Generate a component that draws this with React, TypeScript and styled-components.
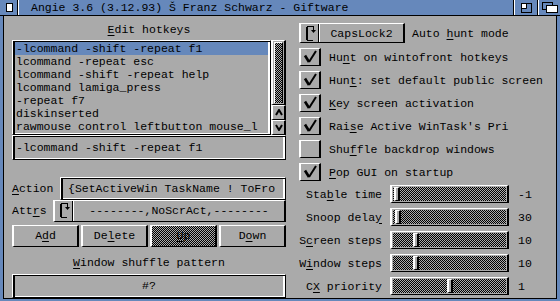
import React from "react";
import styled, { createGlobalStyle, css } from "styled-components";

const gray = "#aaaaaa";
const blue = "#6688bb";

const GlobalStyle = createGlobalStyle`
  html, body {
    margin: 0;
    padding: 0;
    background: ${gray};
  }
  body {
    font-family: "Liberation Mono", "Courier New", monospace;
    font-size: 11.5px;
    color: #000;
  }
  * {
    box-sizing: border-box;
  }
`;

const raised = css`
  border-style: solid;
  border-width: 1px 2px;
  border-color: #fff #000 #000 #fff;
`;

const ridge = css`
  border-style: solid;
  border-width: 1px;
  border-color: #fff #000 #000 #fff;
  box-shadow: inset 2px 1px 0 #000, inset -2px -1px 0 #fff;
`;

const dither = css`
  background: repeating-conic-gradient(#000 0% 25%, ${gray} 0% 50%) 0 0 / 2px 2px;
`;

const hotkeys = [
  "-lcommand -shift -repeat f1",
  "lcommand -repeat esc",
  "lcommand -shift -repeat help",
  "lcommand lamiga_press",
  "-repeat f7",
  "diskinserted",
  "rawmouse control leftbutton mouse_l",
];

export default function App() {
  const options = [
    { label: <>Hu<K>n</K>t on wintofront hotkeys</>, on: true },
    { label: <>Hun<K>t</K>: set default public screen</>, on: true },
    { label: <><K>K</K>ey screen activation</>, on: true },
    { label: <>Rai<K>s</K>e Active WinTask's Pri</>, on: true },
    { label: <>Shu<K>f</K>fle backdrop windows</>, on: false },
    { label: <><K>P</K>op GUI on startup</>, on: true },
  ];

  const sliders = [
    { label: <>Sta<K>b</K>le time</>, value: "-1", knob: 2 },
    { label: <>Snoop dela<K>y</K></>, value: "30", knob: 3 },
    { label: <>S<K>c</K>reen steps</>, value: "10", knob: 21 },
    { label: <>W<K>i</K>ndow steps</>, value: "10", knob: 21 },
    { label: <>C<K>X</K> priority</>, value: "1", knob: 55 },
  ];

  return (
    <Window>
      <GlobalStyle />
      <TitleBar>
        <CloseGadget>
          <svg width="7" height="9" viewBox="0 0 7 9">
            <rect x="0.5" y="0.5" width="6" height="8" fill="#fff" stroke="#000" />
          </svg>
        </CloseGadget>
        <TitleText>Angie 3.6 (3.12.93) Š Franz Schwarz - Giftware</TitleText>
        <TitleGadget>
          <svg width="11" height="10" viewBox="0 0 11 10">
            <rect x="0.5" y="0.5" width="10" height="9" fill={blue} stroke="#000" />
            <rect x="1" y="1" width="4" height="4" fill="#fff" />
            <path d="M5.5 1 V5.5 H1" fill="none" stroke="#000" />
          </svg>
        </TitleGadget>
        <TitleGadget $last>
          <svg width="16" height="11" viewBox="0 0 16 11">
            <rect x="0.5" y="0.5" width="10" height="7" fill={blue} stroke="#000" />
            <rect x="4.5" y="3.5" width="11" height="7" fill="#fff" stroke="#000" />
          </svg>
        </TitleGadget>
      </TitleBar>

      <Body>
        <LeftCol>
          <Heading $h={17}>
            <K>E</K>dit hotkeys
          </Heading>
          <ListRow>
            <ListBox>
              {hotkeys.map((h, i) => (
                <ListItem key={h} $selected={i === 0}>
                  {h}
                </ListItem>
              ))}
            </ListBox>
            <ScrollBar>
              <PropBox>
                <PropKnob />
              </PropBox>
              <ArrowButton>
                <svg width="8" height="7" viewBox="0 0 8 7">
                  <path d="M1 6 L4 1 L7 6" fill="none" stroke="#000" strokeWidth="2" />
                </svg>
              </ArrowButton>
              <ArrowButton>
                <svg width="8" height="7" viewBox="0 0 8 7">
                  <path d="M1 1 L4 6 L7 1" fill="none" stroke="#000" strokeWidth="2" />
                </svg>
              </ArrowButton>
            </ScrollBar>
          </ListRow>
          <Field $pad={3}>-lcommand -shift -repeat f1</Field>

          <FieldRow $top={17} $h={23}>
            <FieldLabel $w={48}>
              <K>A</K>ction
            </FieldLabel>
            <Field $pad={7}>{"{SetActiveWin TaskName ! ToFro"}</Field>
          </FieldRow>
          <FieldRow $top={0} $h={22}>
            <FieldLabel $w={41}>
              Att<K>r</K>s
            </FieldLabel>
            <Cycle>
              <CycleIcon>
                <CycleGlyph />
              </CycleIcon>
              <CycleText>--------,NoScrAct,--------</CycleText>
            </Cycle>
          </FieldRow>
          <ButtonRow>
            <Button>
              A<K>d</K>d
            </Button>
            <Button>
              De<K>l</K>ete
            </Button>
            <Button $ghost>
              <K>U</K>p
            </Button>
            <Button>
              D<K>o</K>wn
            </Button>
          </ButtonRow>
          <Heading $h={27} $padTop={9}>
            <K>W</K>indow shuffle pattern
          </Heading>
          <Field $center>#?</Field>
        </LeftCol>

        <RightCol>
          <CycleRow>
            <Cycle $w={106}>
              <CycleIcon>
                <CycleGlyph />
              </CycleIcon>
              <CycleText>CapsLock2</CycleText>
            </Cycle>
            <span>
              Auto <K>h</K>unt mode
            </span>
          </CycleRow>

          <CheckList>
            {options.map((o, i) => (
              <CheckRow key={i}>
                <CheckBox>
                  {o.on && (
                    <svg width="18" height="16" viewBox="0 0 18 16">
                      <path d="M4 6.5 L8 13" stroke="#000" strokeWidth="2.6" fill="none" />
                      <path d="M8 13 L15 2" stroke="#000" strokeWidth="2" fill="none" />
                    </svg>
                  )}
                </CheckBox>
                <span>{o.label}</span>
              </CheckRow>
            ))}
          </CheckList>

          <SliderGrid>
            {sliders.map((s, i) => (
              <React.Fragment key={i}>
                <SliderLabel>{s.label}</SliderLabel>
                <Track>
                  <Knob style={{ left: s.knob }} />
                </Track>
                <Value>{s.value}</Value>
              </React.Fragment>
            ))}
          </SliderGrid>
        </RightCol>
      </Body>
    </Window>
  );
}

function CycleGlyph() {
  return (
    <svg width="10" height="15" viewBox="0 0 10 15">
      <rect x="0" y="1" width="2" height="13" fill="#000" />
      <rect x="1" y="0" width="7" height="1" fill="#000" />
      <rect x="1" y="14" width="6" height="1" fill="#000" />
      <rect x="7" y="0" width="1" height="4" fill="#000" />
      <polygon points="5,4 10,4 7.5,7" fill="#000" />
    </svg>
  );
}

const K = styled.span`
  text-decoration: underline;
  text-decoration-thickness: 1px;
  text-underline-offset: 2px;
`;

const Window = styled.div`
  width: 560px;
  height: 301px;
  background: ${blue};
  display: flex;
  flex-direction: column;
  overflow: hidden;
`;

const TitleBar = styled.div`
  height: 16px;
  display: flex;
  border-bottom: 1px solid #000;
`;

const CloseGadget = styled.div`
  width: 18px;
  display: flex;
  align-items: center;
  padding-left: 6px;
  border-right: 1px solid #000;
`;

const TitleText = styled.div`
  flex: 1;
  padding-left: 12px;
  line-height: 15px;
  white-space: nowrap;
  border-left: 1px solid #fff;
  border-right: 1px solid #000;
`;

const TitleGadget = styled.div<{ $last?: boolean }>`
  width: ${(p) => (p.$last ? 22 : 24)}px;
  display: flex;
  align-items: center;
  justify-content: center;
  border-left: 1px solid #fff;
  border-right: ${(p) => (p.$last ? "none" : "1px solid #000")};
`;

const Body = styled.div`
  flex: 1;
  margin: 0 3px 2px 3px;
  background: ${gray};
  border: 1px solid #000;
  border-top: none;
  display: flex;
  gap: 13px;
  padding: 7px 0 0 8px;
`;

const LeftCol = styled.div`
  width: 274px;
  display: flex;
  flex-direction: column;
`;

const RightCol = styled.div`
  flex: 1;
  display: flex;
  flex-direction: column;
`;

const Heading = styled.div<{ $h: number; $padTop?: number }>`
  height: ${(p) => p.$h}px;
  padding-top: ${(p) => p.$padTop ?? 0}px;
  line-height: 14px;
  text-align: center;
  white-space: nowrap;
`;

const ListRow = styled.div`
  display: flex;
  height: 95px;
`;

const ListBox = styled.div`
  ${ridge};
  flex: 1;
  padding: 1px 2px;
  overflow: hidden;
`;

const ListItem = styled.div<{ $selected?: boolean }>`
  height: 13px;
  line-height: 13px;
  padding-left: 1px;
  white-space: nowrap;
  overflow: hidden;
  background: ${(p) => (p.$selected ? blue : "transparent")};
`;

const ScrollBar = styled.div`
  width: 15px;
  display: flex;
  flex-direction: column;
`;

const PropBox = styled.div`
  ${raised};
  flex: 1;
  padding: 1px;
  display: flex;
`;

const PropKnob = styled.div`
  ${dither};
  flex: 1;
  border-top: 1px solid #fff;
  border-left: 1px solid #fff;
  border-right: 1px solid #000;
`;

const ArrowButton = styled.div`
  ${raised};
  height: 15px;
  display: flex;
  align-items: center;
  justify-content: center;
`;

const Field = styled.div<{ $pad?: number; $center?: boolean }>`
  ${ridge};
  flex: 1;
  height: 22px;
  min-height: 22px;
  display: flex;
  align-items: center;
  justify-content: ${(p) => (p.$center ? "center" : "flex-start")};
  padding-left: ${(p) => p.$pad ?? 0}px;
  white-space: nowrap;
  overflow: hidden;
`;

const FieldRow = styled.div<{ $top: number; $h: number }>`
  display: flex;
  align-items: center;
  margin-top: ${(p) => p.$top}px;
  height: ${(p) => p.$h}px;

  & > ${Field} {
    height: 100%;
  }
`;

const FieldLabel = styled.div<{ $w: number }>`
  width: ${(p) => p.$w}px;
  white-space: nowrap;
`;

const Cycle = styled.div<{ $w?: number }>`
  ${raised};
  ${(p) => (p.$w ? `width: ${p.$w}px;` : "flex: 1;")}
  height: 100%;
  display: flex;
`;

const CycleIcon = styled.div`
  width: 18px;
  display: flex;
  align-items: center;
  justify-content: center;
  border-right: 1px solid #000;
  padding-left: 2px;
`;

const CycleText = styled.div`
  flex: 1;
  display: flex;
  align-items: center;
  justify-content: center;
  border-left: 1px solid #fff;
  white-space: nowrap;
`;

const ButtonRow = styled.div`
  display: grid;
  grid-template-columns: repeat(4, 1fr);
  gap: 2px;
  margin-top: 3px;
  height: 22px;
`;

const Button = styled.div<{ $ghost?: boolean }>`
  ${raised};
  position: relative;
  display: flex;
  align-items: center;
  justify-content: center;

  ${(p) =>
    p.$ghost &&
    css`
      &::after {
        content: "";
        position: absolute;
        inset: 0;
        background: repeating-conic-gradient(#000 0% 25%, transparent 0% 50%) 0 0 / 2px 2px;
      }
    `}
`;

const CycleRow = styled.div`
  display: flex;
  align-items: center;
  gap: 7px;
  height: 20px;
  white-space: nowrap;
`;

const CheckList = styled.div`
  display: flex;
  flex-direction: column;
  gap: 5px;
  margin-top: 5px;
`;

const CheckRow = styled.div`
  display: flex;
  align-items: center;
  gap: 8px;
  height: 18px;
  white-space: nowrap;
`;

const CheckBox = styled.div`
  ${raised};
  width: 22px;
  height: 18px;
  display: flex;
  align-items: center;
  justify-content: center;
`;

const SliderGrid = styled.div`
  display: grid;
  grid-template-columns: 83px 119px auto;
  grid-auto-rows: 18px;
  column-gap: 8px;
  row-gap: 5px;
  margin-top: 4px;
  align-items: center;
`;

const SliderLabel = styled.div`
  text-align: right;
  white-space: nowrap;
`;

const Track = styled.div`
  ${raised};
  ${dither};
  background-clip: content-box;
  background-origin: content-box;
  padding: 1px;
  height: 18px;
  position: relative;
`;

const Knob = styled.div`
  position: absolute;
  top: 1px;
  bottom: 1px;
  width: 6px;
  background: ${gray};
  border-style: solid;
  border-width: 1px 2px;
  border-color: #fff #000 #000 #fff;
`;

const Value = styled.div`
  padding-left: 1px;
`;
